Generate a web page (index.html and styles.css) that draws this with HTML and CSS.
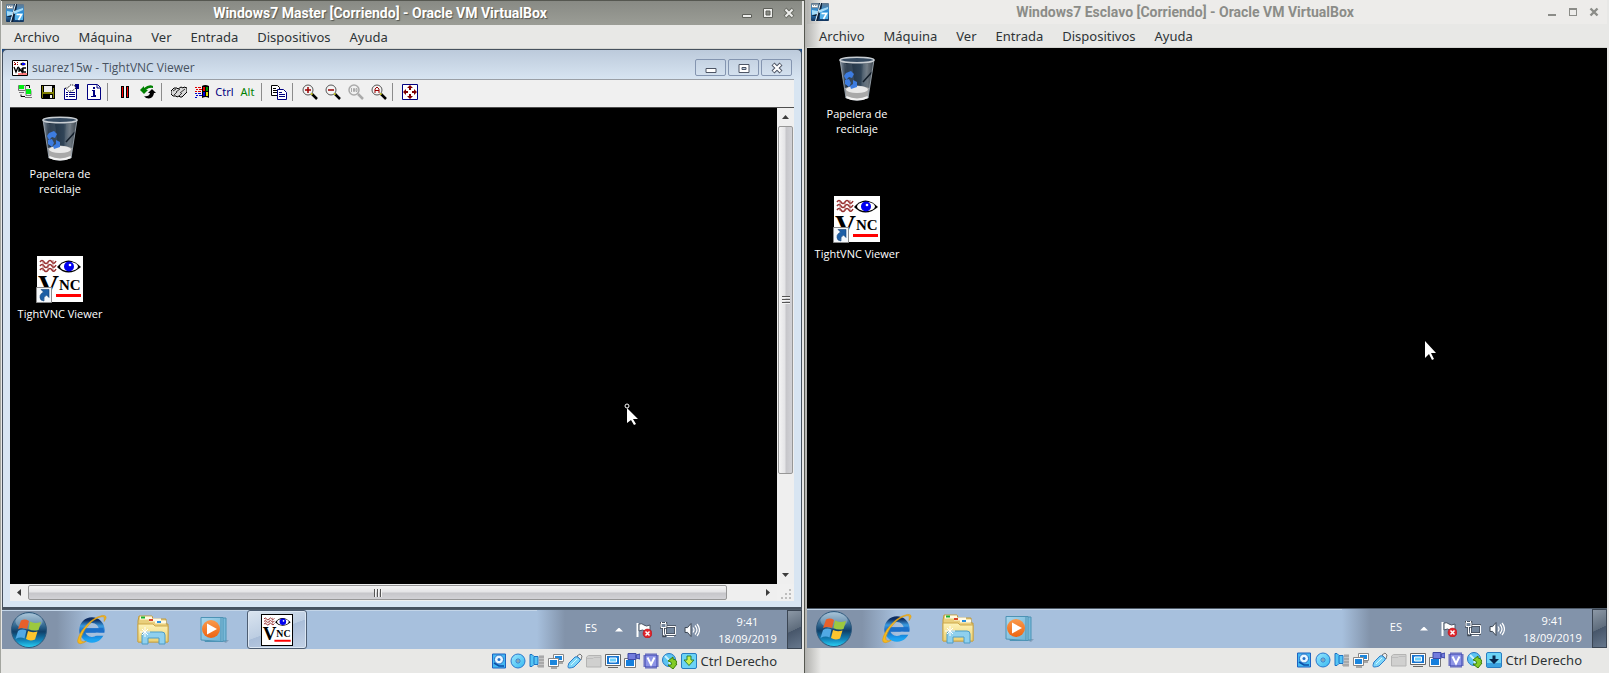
FILE: index.html
```html
<!DOCTYPE html>
<html lang="es">
<head>
<meta charset="utf-8">
<title>Oracle VM VirtualBox</title>
<link rel="stylesheet" href="styles.css">
</head>
<body>
<svg class="sprites" aria-hidden="true">
  <defs>
    <linearGradient id="g-vb" x1="0" y1="0" x2="0" y2="1"><stop offset="0" stop-color="#63788c"/><stop offset=".45" stop-color="#2f8fd8"/><stop offset="1" stop-color="#12335c"/></linearGradient>
    <linearGradient id="g-glass" x1="0" y1="0" x2="1" y2="0"><stop offset="0" stop-color="#8793a0"/><stop offset=".2" stop-color="#1f2f40"/><stop offset=".6" stop-color="#2f4356"/><stop offset=".8" stop-color="#6d7780"/><stop offset="1" stop-color="#3c454e"/></linearGradient>
    <linearGradient id="g-orb" x1="0" y1="0" x2="0" y2="1"><stop offset="0" stop-color="#8fb3cd"/><stop offset=".4" stop-color="#2d638c"/><stop offset=".55" stop-color="#0f3f68"/><stop offset=".8" stop-color="#1285bb"/><stop offset="1" stop-color="#2ad4f6"/></linearGradient>
    <linearGradient id="g-ie" x1="0" y1="0" x2="0" y2="1"><stop offset="0" stop-color="#0d2d63"/><stop offset=".3" stop-color="#3b9be0"/><stop offset=".6" stop-color="#1467c4"/><stop offset="1" stop-color="#1ca4f2"/></linearGradient>
    <linearGradient id="g-folder" x1="0" y1="0" x2="0" y2="1"><stop offset="0" stop-color="#fdf3b8"/><stop offset="1" stop-color="#ecd173"/></linearGradient>
    <linearGradient id="g-play" x1="0" y1="0" x2="0" y2="1"><stop offset="0" stop-color="#f99a4c"/><stop offset="1" stop-color="#ee6412"/></linearGradient>
    <linearGradient id="g-blue" x1="0" y1="0" x2="1" y2="1"><stop offset="0" stop-color="#9be8ff"/><stop offset="1" stop-color="#35b8f0"/></linearGradient>
    <linearGradient id="g-card" x1="0" y1="0" x2="1" y2="1"><stop offset="0" stop-color="#a8d6ec"/><stop offset="1" stop-color="#6fb4d6"/></linearGradient>
  </defs>

  <symbol id="vbox" viewBox="0 0 18 18">
    <rect width="18" height="18" rx="1" fill="url(#g-vb)"/>
    <path d="M0 13C5 12 8 8 8 0h3c0 6-2 10-4 18H4c1-2 2-3 2-5z" fill="#0c2038"/>
    <path d="M8 7l9-3v2l-9 4zM1 7l6 1-1 3-5 1z" fill="#a5dcf8"/>
    <path d="M9 0h1L5 18H4z" fill="#e6f6ff"/>
    <path d="M1 1h6v4H1z" fill="#8b98a4"/><path d="M1.500 2v2M3.500 2v2M2 3.500h4M6 2v2" stroke="#fff" fill="none"/>
    <path d="M9 9h8v7H9z" fill="#55b1e8"/>
    <path d="M10.500 10.500h5L12.500 16" fill="none" stroke="#fff" stroke-width="1.600"/>
  </symbol>

  <symbol id="vnc" viewBox="0 0 46 46">
    <rect width="46" height="46" fill="#fff"/>
    <path d="M3 6q2-3 4 0t4 0 4 0 4-1M3 10q2-3 4 0t4 0 4 0 4-1M3 14q2-3 4 0t4 0 4 0 4-1" fill="none" stroke="#983030" stroke-width="1.500"/>
    <path d="M6 5v10M11 6v9M16 4v10" stroke="#b06060" stroke-width=".8"/>
    <path d="M20 11Q31-2 44 11Q31 22 20 11z" fill="#000"/>
    <ellipse cx="32" cy="10.500" rx="9" ry="4.500" fill="#fff"/><circle cx="32" cy="10.500" r="5" fill="#0000f0"/><circle cx="33" cy="9" r="1.300" fill="#fff"/>
    <path d="M19 38h25v3H19z" fill="#f00"/>
  </symbol>
  <symbol id="vnc-tiny" viewBox="0 0 16 16">
    <path d="M.500.500h15v15H.500z" fill="#fff" stroke="#000"/>
    <path d="M2 2h1v1h1v1h1V2h1v1H5v1h1v1H5V4H4v1H2V4h1V3H2z" fill="#900"/>
    <path d="M8 4q3-3 6 0q-3 3-6 0z" fill="#000"/><path d="M10 3h3v2h-3z" fill="#00f"/>
    <path d="M2 7l2 5 2-5M7 12V8l3 4V8M14 8h-3v4h3" fill="none" stroke="#000" stroke-width="1.300"/>
    <path d="M6 14h9" stroke="#f00"/>
  </symbol>
  <symbol id="shortcut" viewBox="0 0 16 16">
    <path d="M.500.500h15v15H.500z" fill="#f4f8fc" stroke="#8c8c8c"/>
    <path d="M5 2.500h8v8L10.500 8Q7 10 8 14L5 13Q2 8 7.500 5z" fill="#1d5fa6" stroke="#123f76" stroke-width=".6"/>
  </symbol>

  <symbol id="bin" viewBox="0 0 36 46">
    <path d="M1 4L7 42Q18 47 29 42L35 4z" fill="url(#g-glass)"/>
    <path d="M6 8h7l3 22-7 1zM24 8h5l-3 26h-4z" fill="#9fb0bf" opacity=".15"/>
    <path d="M6 32Q18 27 30 32L29 42Q18 47 7 42z" fill="#a9a9a9"/><ellipse cx="18" cy="33.500" rx="11" ry="3.500" fill="#e8e8e8"/>
    <path d="M7 41Q18 46 29 41" fill="none" stroke="#f2f2f2" stroke-width="2"/>
    <path d="M7 17l5-2 3 3-2 4-3-1-3 3-2-4zM14 24l4 2v5l-6 2-1-3 3-2zM6 24l4-1 2 4-2 4-4-3z" fill="#3d7ce0"/>
    <path d="M24 26l9-10" stroke="#111c28" stroke-width="1.500"/>
    <path d="M1 4l6 38M35 4l-6 38" stroke="#a9b4be" opacity=".8"/>
    <ellipse cx="18" cy="4" rx="17" ry="2.800" fill="#34495f" stroke="#c9ced3" stroke-width="1.600"/>
  </symbol>

  <symbol id="orb" viewBox="0 0 36 36">
    <circle cx="18" cy="18" r="17.500" fill="url(#g-orb)" stroke="#30597c"/>
    <ellipse cx="18" cy="9.500" rx="13.500" ry="8" fill="#fff" opacity=".25"/>
    <path d="M10 8.500Q14 6.500 18 9l-2 8q-4-2-9 0z" fill="#e8602b"/>
    <path d="M19 9.500q4 2.500 11 .5l-2.500 8Q22 19.500 17.500 17z" fill="#9cc83f"/>
    <path d="M7 19q4-2.500 8.500-.500l-2 8q-4-2-9 .500z" fill="#51a9e4"/>
    <path d="M17 19q4 2 9.500.500l-2.500 8q-5 2-9-.500z" fill="#fbc52e"/>
  </symbol>
  <symbol id="ie" viewBox="0 0 34 34">
    <circle cx="18" cy="17" r="10.500" fill="none" stroke="url(#g-ie)" stroke-width="6"/>
    <path d="M8 15h22v5H8z" fill="#1b6fc9"/><path d="M22 20h12l-3 3h-9z" fill="#a7c0dd"/>
    <path d="M31 8Q36 1 29 1.500Q17 4 7 18Q-1 32 6 31.500Q9 31 12 29Q6 31 6 26Q9 16 18 8Q26 2 31 3z" fill="#f6b91c" stroke="#d99510" stroke-width=".6"/>
  </symbol>
  <symbol id="explorer" viewBox="0 0 32 30">
    <path d="M1 6l1-5h13l1 3h13v5h2v18H1z" fill="#e9cf7c" stroke="#c09a3c"/>
    <path d="M3 3h12M12 5h12M18 7h11" stroke="#fffbe6" stroke-width="3"/>
    <path d="M4 1.500h4v2H4z" fill="#17b02f"/><path d="M12 4h4v2h-4z" fill="#d8432b"/><path d="M20 6h4v2h-4z" fill="#2a8fe0"/>
    <path d="M1 9h15l2 2h13v16H1z" fill="url(#g-folder)" stroke="#cda84a"/>
    <path d="M5 29V20q0-3 3-3h17q3 0 3 3v9h-6v-6H11v6z" fill="#8fd0ee" stroke="#4c9cc6"/>
    <path d="M8 12v10M3 17h10M5 14l6 6M11 14l-6 6" stroke="#fff"/>
  </symbol>
  <symbol id="player" viewBox="0 0 30 27">
    <path d="M20 24h9l-3 3z" fill="#6c89a5" opacity=".6"/>
    <path d="M8 2h18v23H8z" fill="#79bada" stroke="#4d93b5"/><path d="M5 1.500h18v24H5z" fill="#8ac5e1" stroke="#4d93b5"/>
    <path d="M1 1.500h20v24L1 24z" fill="url(#g-card)" stroke="#4d93b5"/>
    <circle cx="11" cy="13" r="9" fill="url(#g-play)"/><path d="M7 7.500L17 13 7 18.500z" fill="#fff"/>
  </symbol>

  <symbol id="flag" viewBox="0 0 16 16">
    <path d="M1.500 1v14" stroke="#fff" stroke-width="2"/><path d="M3 2q3-1 5 1t6 0v7q-3 1-5-1T3 9z" fill="#fff" stroke="#4b5666"/>
    <circle cx="11.500" cy="11.500" r="4.500" fill="#e0252b" stroke="#a80f14" stroke-width=".5"/><path d="M9.500 9.500l4 4M13.500 9.500l-4 4" stroke="#fff" stroke-width="1.500"/>
  </symbol>
  <symbol id="network" viewBox="0 0 16 16">
    <path d="M5.500 4.500h10v8h-10z" fill="#74869c" stroke="#404a57" stroke-width="2.500"/><path d="M5.500 4.500h10v8h-10zM7 14.500h7" fill="none" stroke="#fff"/>
    <path d="M1 1.500h5v4H1zM3.500 5.500V14H6M1.500 0v2M5.500 0v2" fill="none" stroke="#404a57" stroke-width="2.500"/><path d="M1 1.500h5v4H1zM3.500 5.500V13H5M1.500 0v2M5.500 0v2" fill="#74869c" stroke="#fff"/>
  </symbol>
  <symbol id="sound" viewBox="0 0 16 16">
    <path d="M1 5.500h2.500L7 1.500v13l-3.500-4H1z" fill="#dfe4ea" stroke="#404a57"/><path d="M2 6.500h2l2-3v9l-2-3H2z" fill="#fff"/>
    <path d="M9 5.500q2 2.500 0 5M11 3.500q4 4.500 0 9M13 2q5 6 0 12" fill="none" stroke="#fff" stroke-width="1.200"/>
  </symbol>

  <symbol id="t-new" viewBox="0 0 16 16"><path d="M1.500 1.500h7v5h-7zM9 6.500h5v5H9zM2 8.500h5M8 13.500h7" fill="#e8e8e8" stroke="#777"/><path d="M2 1h5v4H2zM9 5h5v5H9z" fill="#0e1"/><path d="M9 1.500h3.500V4M4 10.500v2h4" fill="none" stroke="#000"/></symbol>
  <symbol id="t-save" viewBox="0 0 16 16"><path d="M1 1h14v14H2L1 14z" fill="#000"/><path d="M2 2h1v12H2zM13 4h1v10h-1zM3 8h10v2H3z" fill="#808000"/><path d="M4 2h8v6H4z" fill="#efefef"/><path d="M10 11h2v3h-2z" fill="#efefef"/></symbol>
  <symbol id="t-props" viewBox="0 0 16 16"><path d="M1.500 4.500h12v11h-12z" fill="#fff" stroke="#000080"/><path d="M3 8.500h2M6 8.500h6M3 10.500h2M6 10.500h6M3 12.500h2M6 12.500h6" stroke="#000080"/><path d="M12 0h4v5h-4z" fill="#000080"/><path d="M2 4l3 3h4l4-3-2-3H7L5 4z" fill="#fff" stroke="#000" stroke-dasharray="1 1"/></symbol>
  <symbol id="t-info" viewBox="0 0 16 16"><path d="M1.500.500h10l3 3v12h-13z" fill="#fff" stroke="#000080"/><path d="M11 1v3h3" fill="none" stroke="#000080"/><path d="M7 3h2v2H7zM6 6h3v5h1v2H5v-1h2V7H6z" fill="#000080"/></symbol>
  <symbol id="t-pause" viewBox="0 0 16 16"><path d="M4 2h3v12H4zM9 2h3v12H9z" fill="#000"/><path d="M5 3h1v10H5zM10 3h1v10h-1z" fill="#f00"/></symbol>
  <symbol id="t-refresh" viewBox="0 0 16 16"><path d="M0 6l4-4v2q5-4 9-2v2Q9 3 6 6h2L4 10z" fill="#008000"/><path d="M16 9l-4-4-4 4h2q-1 4-6 3l2 2q7 2 8-5z" fill="#000"/></symbol>
  <symbol id="t-keys" viewBox="0 0 16 16"><path d="M0 7l3-3h3l1 1 3-2 2 1 1-1 3 1v4l-5 5H9l-1-1-2 1-1-1H2L0 10z" fill="#d8d8d8" stroke="#000"/><path d="M2 7l3-2M5 8l4-3M9 9l5-4M3 11l3-3M8 12l3-3" stroke="#333"/></symbol>
  <symbol id="t-win" viewBox="0 0 16 16"><path d="M8 2q3-2 7 0v12q-3-2-7 0z" fill="#000"/><path d="M9 3h2v4H9z" fill="#e00"/><path d="M12 3h2v4h-2z" fill="#090"/><path d="M9 8h2v4H9z" fill="#00d"/><path d="M12 8h2v4h-2z" fill="#dd0"/><path d="M1 3.500h2M4 3.500h3M2 5.500h2M5 5.500h3M1 7.500h2M4 7.500h3" stroke="#d00"/><path d="M1 9.500h2M4 9.500h3M2 11.500h2M5 11.500h3M1 13.500h2" stroke="#00c"/></symbol>
  <symbol id="t-copy" viewBox="0 0 16 16"><path d="M.500 1.500h6l2 2v8h-8z" fill="#fff" stroke="#000"/><path d="M2 4.500h3M2 6.500h5M2 8.500h5" stroke="#000"/><path d="M6.500 5.500h6l3 3v7h-9z" fill="#fff" stroke="#000080"/><path d="M8 8.500h3M8 10.500h6M8 12.500h6" stroke="#000080"/></symbol>
  <symbol id="t-lens" viewBox="0 0 16 16"><circle cx="6" cy="6" r="5" fill="#f4f4f4" stroke="#555"/><path d="M10 10l5 5" stroke="#000" stroke-width="2.500"/><path d="M9 9.500l1.500 1" stroke="#dd0" stroke-width="1.500"/></symbol>
  <symbol id="t-lens-off" viewBox="0 0 16 16"><circle cx="6" cy="6" r="5" fill="none" stroke="#aaa" stroke-width="1.500"/><path d="M10 10l5 5" stroke="#aaa" stroke-width="2.500"/><path d="M3.500 4v4M5.500 4.500h1v3h-1zM8 4.500h1v3H8z" fill="none" stroke="#aaa"/></symbol>
  <symbol id="t-full" viewBox="0 0 16 16"><path d="M.500.500h15v15H.500z" fill="#fff" stroke="#000080"/><path d="M8 1l3 3H9v2H7V4H5zM8 15l3-3H9v-2H7v2H5zM1 8l3-3v2h2v2H4v2zM15 8l-3-3v2h-2v2h2v2z" fill="#800000"/></symbol>

  <symbol id="s-disk" viewBox="0 0 16 16"><path d="M1.500 1h13v14h-13z" fill="#43b8f2" stroke="#1d63c2"/><circle cx="8" cy="6.500" r="4.500" fill="#e8f6ff" stroke="#2470c8"/><circle cx="8" cy="6.500" r="1.500" fill="#2470c8"/><path d="M3 10l5 3h5" stroke="#0c4ea8" stroke-width="1.500" fill="none"/></symbol>
  <symbol id="s-cd" viewBox="0 0 16 16"><circle cx="8" cy="8" r="7" fill="url(#g-blue)" stroke="#2b78cc"/><circle cx="8" cy="8" r="2" fill="#ddf6ff" stroke="#2b70bd"/><circle cx="8" cy="8" r=".8" fill="#145"/></symbol>
  <symbol id="s-audio" viewBox="0 0 16 16"><path d="M10 2h5v13H9v-3h1z" fill="#c4c4c4"/><path d="M10 4h5M10 7h5M10 10h5M8 13h7" stroke="#8d8d8d"/><path d="M1 1.500h2l2 2h4v8H5l-2 2H1z" fill="#54c5f5" stroke="#1d72c4"/><path d="M5 4v7" stroke="#1d72c4"/></symbol>
  <symbol id="s-net" viewBox="0 0 16 16"><path d="M5.500 1.500h10v7h-10z" fill="#fff" stroke="#888"/><path d="M7 3h7v4H7z" fill="#1b86dd"/><path d="M.500 5.500h10v8H.500z" fill="#fff" stroke="#888"/><path d="M2 7h7v5H2z" fill="#1b86dd"/><path d="M3 15h6M11 10h4" stroke="#666"/></symbol>
  <symbol id="s-usb" viewBox="0 0 16 16"><path d="M10 3l3-2 2 2-1 4z" fill="#eee" stroke="#777"/><path d="M2 10l6-6q2-1 4 1t1 3l-6 6q-3 1-5 1t0-5z" fill="#7dd6f8" stroke="#2a7cca"/><path d="M4 12l6-6" stroke="#d7f5ff"/></symbol>
  <symbol id="s-folder" viewBox="0 0 16 16"><path d="M.500 14V4l2-1.500h12.500V14z" fill="#d0d0cf" stroke="#b4b4b3"/><path d="M1 5.500h6l1-1h7" fill="none" stroke="#bdbdbd"/></symbol>
  <symbol id="s-screen" viewBox="0 0 16 16"><path d="M.500 1.500h15v11h-15z" fill="#fff" stroke="#666"/><path d="M2 3h12v8H2z" fill="#1676d2"/><path d="M4.500 5h7v4h-7z" fill="#6cd0fb" stroke="#fff"/><path d="M3 14.500h10" stroke="#666"/></symbol>
  <symbol id="s-rec" viewBox="0 0 16 16"><path d="M.500 5.500h11v9H.500z" fill="#fff" stroke="#777"/><path d="M2 7h8v6H2z" fill="#157fdd"/><path d="M4 .500h8v6H4zM12 2l4-1v5l-4-1z" fill="#737cdd" stroke="#3f48a5"/></symbol>
  <symbol id="s-cpu" viewBox="0 0 16 16"><path d="M3 0v16M5 0v16M7 0v16M9 0v16M11 0v16M13 0v16M0 3h16M0 5h16M0 7h16M0 9h16M0 11h16M0 13h16" stroke="#4047b5" stroke-width=".8"/><path d="M2 2h12v12H2z" fill="#8e95e6" stroke="#3940ad"/><path d="M4.500 4.500L8 11.500l3.500-7" fill="none" stroke="#fff" stroke-width="2"/></symbol>
  <symbol id="s-mouse" viewBox="0 0 16 16"><circle cx="7" cy="7" r="6.500" fill="#5cc4f2" stroke="#2476c2"/><path d="M3 3l4 4 1 5" stroke="#c8f0ff" stroke-width="2" fill="none"/><path d="M6 8l5-4v2q5 1 3 5h1l-4 5-5-4h3q2-3-3-4z" fill="#83cc27" stroke="#3c7d0a"/></symbol>
  <symbol id="s-key-on" viewBox="0 0 16 16"><rect x=".5" y=".5" width="15" height="15" rx="1.500" fill="#6cd3f6" stroke="#287dc1"/><path d="M6 3h4v4h3l-5 5.500L3 7h3z" fill="#c8f04c" stroke="#2d8038"/></symbol>
  <symbol id="s-key-off" viewBox="0 0 16 16"><rect x=".5" y=".5" width="15" height="15" rx="1.500" fill="#6cd3f6" stroke="#287dc1"/><path d="M1 11h14v4H1z" fill="#3aa1e0"/><path d="M6.500 3.500h3V7H13l-5 5-5-5h3.500z" fill="#08284f"/></symbol>

  <symbol id="w-min" viewBox="0 0 12 12"><path d="M1.500 7.500h9v3h-9z" class="glyph"/></symbol>
  <symbol id="w-max" viewBox="0 0 12 12"><path d="M1.500 1.500h9v9h-9z" class="glyph"/><path d="M4 4h4v4H4z" class="glyph-hole"/></symbol>
  <symbol id="w-close" viewBox="0 0 12 12"><path d="M2 2l8 8M10 2l-8 8" class="glyph-edge"/><path d="M2.500 2.500l7 7M9.500 2.500l-7 7" class="glyph-core"/></symbol>
  <symbol id="f-min" viewBox="0 0 12 12"><path d="M2 8h8v2H2z" fill="currentColor"/></symbol>
  <symbol id="f-max" viewBox="0 0 12 12"><path d="M2 2h8v8H2zM3 4v5h6V4z" fill="currentColor" fill-rule="evenodd"/></symbol>
  <symbol id="f-close" viewBox="0 0 12 12"><path d="M2.500 2.500l7 7M9.500 2.500l-7 7" stroke="currentColor" stroke-width="2.400"/></symbol>
  <symbol id="a-min" viewBox="0 0 12 12"><path d="M1 6.500h10v4H1z" fill="#fff" stroke="#4d5565"/></symbol>
  <symbol id="a-max" viewBox="0 0 12 12"><path d="M1 2.500h10v8H1z" fill="#fff" stroke="#4d5565"/><path d="M4 5.500h4v2H4z" fill="#b9c9dc" stroke="#4d5565"/></symbol>
  <symbol id="a-close" viewBox="0 0 12 12"><path d="M2 2l8 8M10 2l-8 8" stroke="#4d5565" stroke-width="4.200"/><path d="M2.500 2.500l7 7M9.500 2.500l-7 7" stroke="#fff" stroke-width="2.200"/></symbol>

  <symbol id="cursor" viewBox="0 0 14 22"><path d="M2 2v17l4-4 3 6 2-1-3-6h5z" fill="#fff"/></symbol>
  <symbol id="cursor-dot" viewBox="0 0 14 24"><circle cx="3" cy="3" r="2" fill="#000" stroke="#fff"/><path d="M3 5v15l4-3 3 5 2-1-3-5h5z" fill="#fff"/></symbol>
</svg>

<main class="screen">
  <section class="vm vm-active" aria-label="Windows7 Master">
    <header class="titlebar">
      <svg class="app-icon"><use href="#vbox"/></svg>
      <h1 class="title">Windows7 Master [Corriendo] - Oracle VM VirtualBox</h1>
      <div class="controls">
        <button aria-label="Minimizar"><svg><use href="#w-min"/></svg></button>
        <button aria-label="Maximizar"><svg><use href="#w-max"/></svg></button>
        <button aria-label="Cerrar"><svg><use href="#w-close"/></svg></button>
      </div>
    </header>
    <nav class="menubar">
      <button>Archivo</button><button>Máquina</button><button>Ver</button><button>Entrada</button><button>Dispositivos</button><button>Ayuda</button>
    </nav>
    <div class="guest">
      <section class="viewer" aria-label="TightVNC Viewer">
        <header class="viewer-title">
          <svg class="icon"><use href="#vnc-tiny"/></svg>
          <h2>suarez15w - TightVNC Viewer</h2>
          <div class="viewer-controls">
            <button aria-label="Minimizar"><svg><use href="#a-min"/></svg></button>
            <button aria-label="Maximizar"><svg><use href="#a-max"/></svg></button>
            <button aria-label="Cerrar"><svg><use href="#a-close"/></svg></button>
          </div>
        </header>
        <div class="toolbar" role="toolbar">
          <button aria-label="Nueva conexión"><svg class="icon"><use href="#t-new"/></svg></button>
          <button aria-label="Guardar"><svg class="icon"><use href="#t-save"/></svg></button>
          <button aria-label="Opciones"><svg class="icon"><use href="#t-props"/></svg></button>
          <button aria-label="Información"><svg class="icon"><use href="#t-info"/></svg></button>
          <span class="sep"></span>
          <button aria-label="Pausa"><svg class="icon"><use href="#t-pause"/></svg></button>
          <button aria-label="Actualizar"><svg class="icon"><use href="#t-refresh"/></svg></button>
          <span class="sep"></span>
          <button aria-label="Ctrl-Alt-Supr"><svg class="icon"><use href="#t-keys"/></svg></button>
          <button aria-label="Tecla Windows"><svg class="icon"><use href="#t-win"/></svg></button>
          <button class="key-ctrl">Ctrl</button>
          <button class="key-alt">Alt</button>
          <span class="sep"></span>
          <button aria-label="Transferir archivos"><svg class="icon"><use href="#t-copy"/></svg></button>
          <span class="sep"></span>
          <button aria-label="Acercar"><svg class="icon" viewBox="0 0 16 16"><use href="#t-lens"/><path d="M3 6h6M6 3v6" stroke="#900" stroke-width="1.500"/></svg></button>
          <button aria-label="Alejar"><svg class="icon" viewBox="0 0 16 16"><use href="#t-lens"/><path d="M3 6h6" stroke="#900" stroke-width="1.500"/></svg></button>
          <button aria-label="Tamaño real" disabled><svg class="icon"><use href="#t-lens-off"/></svg></button>
          <button aria-label="Ajustar"><svg class="icon" viewBox="0 0 16 16"><use href="#t-lens"/><path d="M4 9V5l2-2 2 2v4M4 6.500h4" fill="none" stroke="#900"/></svg></button>
          <span class="sep"></span>
          <button aria-label="Pantalla completa"><svg class="icon"><use href="#t-full"/></svg></button>
        </div>
        <div class="viewport">
          <div class="desktop">
            <button class="shortcut"><svg class="bin"><use href="#bin"/></svg><span>Papelera de<br>reciclaje</span></button>
            <button class="shortcut"><span class="vnc-icon"><svg class="logo" viewBox="0 0 46 46"><use href="#vnc"/><text x="1" y="39" class="vnc-big">V</text><text x="22" y="34" class="vnc-small">NC</text></svg><svg class="badge"><use href="#shortcut"/></svg></span><span>TightVNC Viewer</span></button>
            <svg class="pointer pointer-remote"><use href="#cursor-dot"/></svg>
          </div>
          <div class="scroll scroll-v">
            <button class="arrow arrow-up" aria-label="Subir"></button>
            <div class="thumb"></div><div class="rest"></div>
            <button class="arrow arrow-down" aria-label="Bajar"></button>
          </div>
          <div class="scroll scroll-h">
            <button class="arrow arrow-left" aria-label="Izquierda"></button>
            <div class="thumb"></div><div class="rest"></div>
            <button class="arrow arrow-right" aria-label="Derecha"></button>
          </div>
          <svg class="corner" viewBox="0 0 17 17"><path d="M12 5h2v2h-2zM8 9h2v2H8zM12 9h2v2h-2zM4 13h2v2H4zM8 13h2v2H8zM12 13h2v2h-2z" fill="#bdbdbd"/></svg>
        </div>
      </section>
      <footer class="taskbar">
        <button class="start" aria-label="Inicio"><svg><use href="#orb"/></svg></button>
        <button class="pin" aria-label="Internet Explorer"><svg><use href="#ie"/></svg></button>
        <button class="pin" aria-label="Explorador"><svg><use href="#explorer"/></svg></button>
        <button class="pin" aria-label="Reproductor"><svg><use href="#player"/></svg></button>
        <button class="pin task" aria-label="TightVNC Viewer"><svg viewBox="0 0 46 46"><use href="#vnc"/><text x="1" y="39" class="vnc-big">V</text><text x="22" y="34" class="vnc-small">NC</text></svg></button>
        <div class="tray">
          <span class="lang">ES</span><span class="more"></span>
          <svg class="icon"><use href="#flag"/></svg><svg class="icon"><use href="#network"/></svg><svg class="icon"><use href="#sound"/></svg>
          <time class="clock"><span>9:41</span><span>18/09/2019</span></time>
        </div>
        <button class="peek" aria-label="Mostrar escritorio"></button>
      </footer>
    </div>
    <footer class="statusbar">
      <svg class="icon"><use href="#s-disk"/></svg><svg class="icon"><use href="#s-cd"/></svg><svg class="icon"><use href="#s-audio"/></svg><svg class="icon"><use href="#s-net"/></svg><svg class="icon"><use href="#s-usb"/></svg><svg class="icon"><use href="#s-folder"/></svg><svg class="icon"><use href="#s-screen"/></svg><svg class="icon"><use href="#s-rec"/></svg><svg class="icon"><use href="#s-cpu"/></svg><svg class="icon"><use href="#s-mouse"/></svg><svg class="icon"><use href="#s-key-on"/></svg>
      <span>Ctrl Derecho</span>
    </footer>
  </section>

  <section class="vm vm-idle" aria-label="Windows7 Esclavo">
    <header class="titlebar">
      <svg class="app-icon"><use href="#vbox"/></svg>
      <h1 class="title">Windows7 Esclavo [Corriendo] - Oracle VM VirtualBox</h1>
      <div class="controls">
        <button aria-label="Minimizar"><svg><use href="#f-min"/></svg></button>
        <button aria-label="Maximizar"><svg><use href="#f-max"/></svg></button>
        <button aria-label="Cerrar"><svg><use href="#f-close"/></svg></button>
      </div>
    </header>
    <nav class="menubar">
      <button>Archivo</button><button>Máquina</button><button>Ver</button><button>Entrada</button><button>Dispositivos</button><button>Ayuda</button>
    </nav>
    <div class="guest">
      <div class="desktop">
        <button class="shortcut"><svg class="bin"><use href="#bin"/></svg><span>Papelera de<br>reciclaje</span></button>
        <button class="shortcut"><span class="vnc-icon"><svg class="logo" viewBox="0 0 46 46"><use href="#vnc"/><text x="1" y="39" class="vnc-big">V</text><text x="22" y="34" class="vnc-small">NC</text></svg><svg class="badge"><use href="#shortcut"/></svg></span><span>TightVNC Viewer</span></button>
        <svg class="pointer pointer-local"><use href="#cursor"/></svg>
      </div>
      <footer class="taskbar">
        <button class="start" aria-label="Inicio"><svg><use href="#orb"/></svg></button>
        <button class="pin" aria-label="Internet Explorer"><svg><use href="#ie"/></svg></button>
        <button class="pin" aria-label="Explorador"><svg><use href="#explorer"/></svg></button>
        <button class="pin" aria-label="Reproductor"><svg><use href="#player"/></svg></button>
        <div class="tray">
          <span class="lang">ES</span><span class="more"></span>
          <svg class="icon"><use href="#flag"/></svg><svg class="icon"><use href="#network"/></svg><svg class="icon"><use href="#sound"/></svg>
          <time class="clock"><span>9:41</span><span>18/09/2019</span></time>
        </div>
        <button class="peek" aria-label="Mostrar escritorio"></button>
      </footer>
    </div>
    <footer class="statusbar">
      <svg class="icon"><use href="#s-disk"/></svg><svg class="icon"><use href="#s-cd"/></svg><svg class="icon"><use href="#s-audio"/></svg><svg class="icon"><use href="#s-net"/></svg><svg class="icon"><use href="#s-usb"/></svg><svg class="icon"><use href="#s-folder"/></svg><svg class="icon"><use href="#s-screen"/></svg><svg class="icon"><use href="#s-rec"/></svg><svg class="icon"><use href="#s-cpu"/></svg><svg class="icon"><use href="#s-mouse"/></svg><svg class="icon"><use href="#s-key-off"/></svg>
      <span>Ctrl Derecho</span>
    </footer>
  </section>
</main>
</body>
</html>
```
FILE: styles.css
```css
* { box-sizing: border-box; }

body {
  margin: 0;
  font-family: "Noto Sans", "Open Sans", sans-serif;
  font-size: 13px;
  color: #2e3436;
}

button {
  border: 0;
  padding: 0;
  background: none;
  font: inherit;
  color: inherit;
}

svg { display: block; }
.sprites { position: absolute; width: 0; height: 0; }
.icon { width: 16px; height: 16px; flex: none; }

.vnc-big { font: bold 29px "Liberation Serif", serif; fill: #000; }
.vnc-small { font: bold 15px "Liberation Serif", serif; fill: #000; }

.screen {
  display: grid;
  grid-template-columns: 805fr 804fr;
  min-height: 100vh;
}

/* VirtualBox windows */
.vm {
  display: flex;
  flex-direction: column;
  min-width: 0;
  background: #e8e8e6;
}
.vm-active {
  padding: 1px 2px 0 1px;
  border-left: 1px solid #a3a59f;
  border-right: 1px solid #555750;
  background: linear-gradient(#555750 1px, #e8e8e6 1px);
}
.vm-idle {
  padding: 0 2px 1px;
  background: linear-gradient(90deg, #b2b2af, #e8e8e6 16px);
}

.titlebar {
  display: flex;
  align-items: center;
  height: 24px;
  padding: 0 3px 0 4px;
}
.vm-active .titlebar {
  color: #fff;
  background: linear-gradient(#888a84, #9b9d96);
  text-shadow: 1px 1px 1px #555750;
}
.vm-idle .titlebar {
  color: #8b8c88;
  background: linear-gradient(90deg, #b2b2af, #edecea 16px);
}
.app-icon { width: 18px; height: 18px; }
.title {
  flex: 1;
  margin: 0;
  text-align: center;
  font: bold 14px/20px Roboto, sans-serif;
}
.controls { display: flex; }
.controls button {
  display: grid;
  place-items: center;
  width: 21px;
  height: 20px;
}
.controls svg { width: 12px; height: 12px; }
.glyph { fill: #eeeeec; stroke: #5e605a; }
.glyph-hole { fill: #888a84; stroke: #5e605a; }
.glyph-edge { stroke: #6b6d66; stroke-width: 4; }
.glyph-core { stroke: #eeeeec; stroke-width: 2; }

.menubar {
  display: flex;
  align-items: center;
  gap: 1px;
  height: 24px;
  padding: 0 3px;
  border-bottom: 1px solid #d5d6d2;
}
.menubar button { padding: 0 9px; line-height: 20px; }

.guest {
  display: flex;
  flex-direction: column;
  flex: 1;
  min-height: 0;
  background: #1a4a86;
}

/* Remote desktops */
.desktop {
  position: relative;
  flex: 1;
  display: grid;
  grid-template-columns: 90px;
  grid-auto-rows: 140px;
  align-content: start;
  padding: 8px 5px;
  background: #000;
}
.shortcut {
  display: flex;
  flex-direction: column;
  align-items: center;
  gap: 4px;
  color: #fff;
  font: 11px/15px "Open Sans", "Noto Sans", sans-serif;
  white-space: nowrap;
}
.bin { width: 36px; height: 46px; }
.vnc-icon { position: relative; }
.logo { width: 46px; height: 46px; }
.badge { position: absolute; left: -1px; bottom: -1px; width: 16px; height: 16px; }
.pointer { position: absolute; width: 14px; }
.pointer-remote { left: 80%; top: 62%; height: 24px; }
.pointer-local { left: 77%; top: 52%; height: 22px; }

/* TightVNC viewer */
.viewer {
  flex: 1;
  display: flex;
  flex-direction: column;
  min-height: 0;
  padding: 0 7px 6px;
  border: 1px solid #46515e;
  border-bottom-width: 2px;
  border-radius: 5px 5px 0 0;
  background: linear-gradient(#bccadb, #d8e5f2 30px);
}
.viewer-title {
  display: flex;
  align-items: center;
  gap: 4px;
  height: 29px;
  padding: 6px 2px 0;
}
.viewer-title h2 {
  flex: 1;
  margin: 0;
  font: 12px/16px "Open Sans", "Noto Sans", sans-serif;
  color: #47525f;
}
.viewer-controls { display: flex; gap: 2px; }
.viewer-controls button {
  display: grid;
  place-items: center;
  width: 31px;
  height: 17px;
  border: 1px solid #8495b0;
  border-radius: 2px;
}
.viewer-controls svg { width: 12px; height: 12px; }

.toolbar {
  display: flex;
  align-items: center;
  height: 29px;
  padding: 0 3px 4px;
  border-top: 1px solid #9a9fa6;
  border-bottom: 1px solid #4e4e4e;
  background: #f0f0f0;
  font-size: 11px;
}
.toolbar button { display: grid; place-items: center; width: 23px; height: 20px; }
.sep { width: 8px; height: 18px; background: linear-gradient(#8c8c8c, #8c8c8c) 2px 0 / 1px 100% no-repeat; }
.key-ctrl { color: #000080; }
.key-alt { color: #008000; }

.viewport {
  flex: 1;
  min-height: 0;
  display: grid;
  grid-template: minmax(0, 1fr) 17px / minmax(0, 1fr) 17px;
}
.scroll { display: flex; background: #efefef; }
.scroll-v { flex-direction: column; padding: 0 1px; }
.scroll-h { padding: 1px 0; }
.thumb {
  display: grid;
  place-items: center;
  border: 1px solid #979797;
  border-radius: 2px;
}
.scroll-v .thumb { flex: 348; background: linear-gradient(90deg, #f4f4f4, #e4e4e6 45%, #c6c6ca 55%, #d2d2d6); }
.scroll-h .thumb { flex: 700; background: linear-gradient(#f4f4f4, #e4e4e6 45%, #c6c6ca 55%, #d2d2d6); }
.thumb::after { content: ""; width: 8px; height: 8px; }
.scroll-v .thumb::after { background: repeating-linear-gradient(#555 0 1px, #f4f4f4 1px 2px, transparent 2px 3px); }
.scroll-h .thumb::after { background: repeating-linear-gradient(90deg, #555 0 1px, #f4f4f4 1px 2px, transparent 2px 3px); }
.scroll-v .rest { flex: 93; }
.scroll-h .rest { flex: 32; }
.arrow { flex: none; display: grid; place-items: center; width: 18px; height: 18px; }
.scroll-v .arrow { width: 15px; }
.scroll-h .arrow { height: 15px; }
.arrow::after { content: ""; background: #3c3c3c; }
.arrow-up::after, .arrow-down::after { width: 7px; height: 4px; }
.arrow-left::after, .arrow-right::after { width: 4px; height: 7px; }
.arrow-up::after { clip-path: polygon(50% 0, 100% 100%, 0 100%); }
.arrow-down::after { clip-path: polygon(0 0, 100% 0, 50% 100%); }
.arrow-left::after { clip-path: polygon(0 50%, 100% 0, 100% 100%); }
.arrow-right::after { clip-path: polygon(0 0, 100% 50%, 0 100%); }
.corner { width: 17px; height: 17px; background: #f0f0f0; }

/* Windows taskbar */
.taskbar {
  display: flex;
  align-items: center;
  height: 40px;
  border-top: 1px solid #4e5a68;
  box-shadow: inset 0 1px #c3d5e8;
  background: linear-gradient(90deg, #8293aa 55px, #a7c0dd 90px);
}
.start { width: 54px; padding-left: 9px; }
.start svg { width: 36px; height: 36px; }
.pin {
  display: grid;
  place-items: center;
  width: 60px;
  height: 39px;
  margin-right: 2px;
}
.start + .pin { margin-left: 5px; }
.pin svg { width: 32px; height: 32px; }
.pin:nth-of-type(4) svg { width: 30px; height: 27px; }
.task {
  border: 1px solid #4d5d72;
  border-radius: 3px;
  background: linear-gradient(160deg, #dbe5f0, #bccde2 50%, #a9bdd8 51%, #c3d2e6);
  box-shadow: inset 0 0 0 1px #dce7f3;
}
.task svg { border: 1px solid #000; }
.tray {
  display: flex;
  align-items: center;
  align-self: stretch;
  gap: 8px;
  margin-left: auto;
  padding-left: 48px;
  background: linear-gradient(90deg, #a7c0dd, #8293aa 28px);
  color: #fff;
  font: 11px/17px "Open Sans", "Noto Sans", sans-serif;
}
.lang { padding-bottom: 5px; }
.more {
  width: 8px;
  height: 4px;
  margin: 0 5px 0 10px;
  background: #fff;
  clip-path: polygon(50% 0, 100% 100%, 0 100%);
}
.clock {
  display: flex;
  flex-direction: column;
  width: 79px;
  text-align: center;
}
.peek {
  align-self: stretch;
  width: 15px;
  border: 1px solid #3b4654;
  background: linear-gradient(155deg, #8c98a6, #5f6d7d 50%, #47566a 51%, #66778c);
}

.statusbar {
  display: flex;
  align-items: center;
  justify-content: flex-end;
  gap: 3px;
  height: 24px;
  padding: 0 25px 0 0;
}
.statusbar span { padding-left: 1px; line-height: 20px; }
```
